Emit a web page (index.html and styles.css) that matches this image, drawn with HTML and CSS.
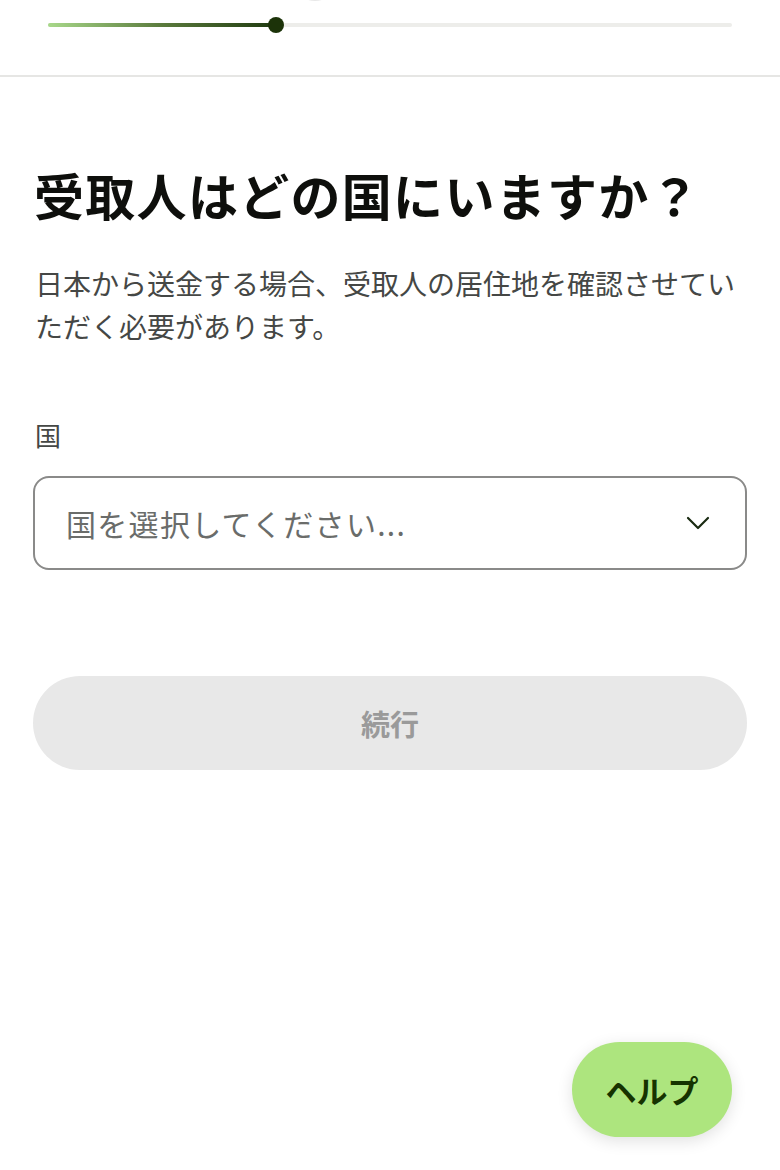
FILE: index.html
```html
<!DOCTYPE html>
<html lang="ja">
<head>
    <meta charset="UTF-8">
    <meta name="viewport" content="width=device-width, initial-scale=1.0">
    <title>受取人の国</title>
    <link rel="stylesheet" href="styles.css">
</head>
<body>
    <header class="top-bar">
        <div class="top-logo"></div>
        <div class="progress">
            <div class="progress-fill"></div>
            <div class="progress-knob"></div>
        </div>
    </header>

    <main class="content">
        <h1 class="title">受取人はどの国にいますか？</h1>
        <p class="lead">日本から送金する場合、受取人の居住地を確認させていただく必要があります。</p>

        <label class="field-label">国</label>
        <div class="select-box">
            <span class="placeholder">国を選択してください...</span>
            <svg class="chevron" width="26" height="16" viewBox="0 0 26 16">
                <path d="M3 3 L13 13 L23 3" fill="none" stroke="#1a2b12" stroke-width="2.2" stroke-linecap="round" stroke-linejoin="round"/>
            </svg>
        </div>

        <button class="continue-button" disabled>続行</button>
    </main>

    <button class="help-button">ヘルプ</button>
</body>
</html>
```

FILE: styles.css
```css
body {
    margin: 0;
    font-family: "Noto Sans CJK JP", "Noto Sans", sans-serif;
    background: #fff;
    color: #0e0f0c;
    height: 1170px;
    position: relative;
    overflow: hidden;
}
.top-bar {
    height: 75px;
    border-bottom: 2px solid #e6e6e4;
    padding: 0 48px 0 48px;
    position: relative;
}
.top-logo {
    position: absolute;
    left: 293px;
    top: -43px;
    width: 40px;
    height: 40px;
    border-radius: 50%;
    border: 2px solid #e8e8e8;
}
.progress {
    position: relative;
    top: 23px;
    height: 4px;
    background: #ededea;
    border-radius: 2px;
}
.progress-fill {
    width: 228px;
    height: 4px;
    border-radius: 2px;
    background: linear-gradient(to right, #a8d88a, #5a7a3c 50%, #1f3a10);
}
.progress-knob {
    position: absolute;
    left: 220px;
    top: -6px;
    width: 16px;
    height: 16px;
    border-radius: 50%;
    background: #1c3309;
}
.content {
    padding: 0 33px;
}
.title {
    margin: 81px 0 0 1px;
    font-size: 50px;
    font-weight: 700;
    line-height: 72px;
    letter-spacing: 1.3px;
    color: #0e0f0c;
}
.lead {
    margin: 32px 0 0 2px;
    font-size: 28px;
    line-height: 43px;
    color: #454745;
}
.field-label {
    display: block;
    margin: 68px 0 0 2px;
    font-size: 26px;
    line-height: 38px;
    color: #454745;
}
.select-box {
    margin-top: 22px;
    height: 90px;
    border: 2px solid #8a8a89;
    border-radius: 16px;
    display: flex;
    align-items: center;
    justify-content: space-between;
    padding: 0 34px 0 31px;
}
.placeholder {
    font-size: 30px;
    letter-spacing: 1.3px;
    color: #6a6c6a;
}
.continue-button {
    display: block;
    width: 100%;
    margin-top: 106px;
    height: 94px;
    border: none;
    border-radius: 47px;
    background: #e8e8e8;
    color: #9a9a9a;
    font-family: inherit;
    font-size: 29px;
    font-weight: 700;
}
.help-button {
    position: absolute;
    right: 48px;
    bottom: 33px;
    width: 160px;
    height: 95px;
    border: none;
    border-radius: 48px;
    background: #ade57e;
    color: #163300;
    font-family: inherit;
    font-size: 31px;
    font-weight: 700;
    box-shadow: 0 4px 16px rgba(0, 0, 0, 0.12);
}
```
